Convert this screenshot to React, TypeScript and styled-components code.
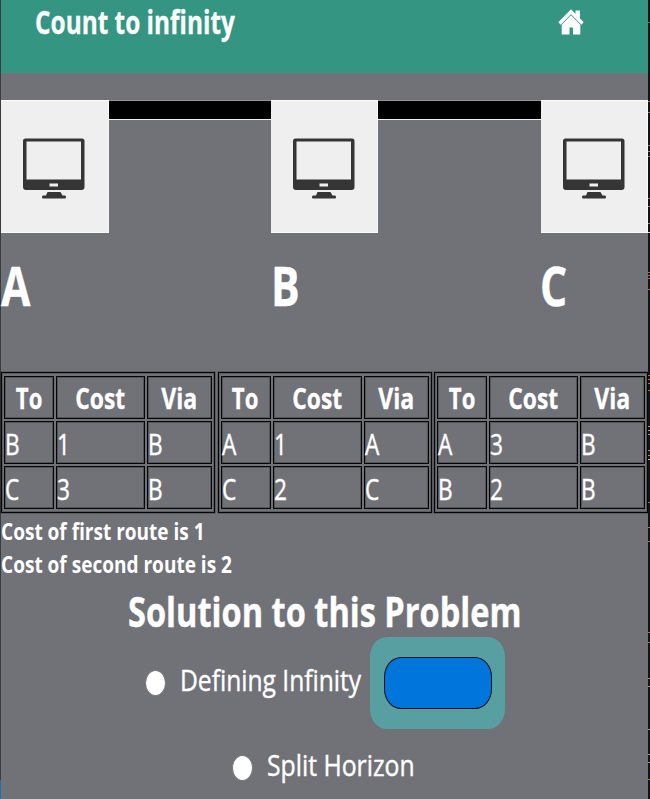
import React from "react";
import styled, { createGlobalStyle } from "styled-components";

const GlobalStyle = createGlobalStyle`
  * { box-sizing: border-box; }
  body { margin: 0; background: #717278; }
`;

const Window = styled.div`
  display: flex;
  width: 650px;
  height: 799px;
  overflow: hidden;
  background: #717278;
  color: #fff;
  font-family: "Open Sans", "Noto Sans", sans-serif;
`;

const LeftEdge = styled.div`
  flex: 0 0 1px;
  background: linear-gradient(#3b3b3d 780px, #2173ae 780px);
`;

const RightEdge = styled.svg`
  flex: 0 0 2px;
  width: 2px;
  height: 799px;
  background: #131313;
`;

const Page = styled.main`
  flex: 0 0 647px;
  display: flex;
  flex-direction: column;
`;

const Header = styled.header`
  flex: 0 0 73px;
  display: flex;
  justify-content: space-between;
  padding: 0 64px 0 34px;
  background: #349682;
`;

const HomeIcon = styled.svg`
  width: 26px;
  height: 26px;
  margin-top: 9px;
`;

/* Text condensed horizontally from its left edge or its centre. */
const Condensed = styled.span<{ $x: number; $origin?: string }>`
  display: inline-block;
  white-space: nowrap;
  transform: scaleX(${(p) => p.$x});
  transform-origin: ${(p) => p.$origin ?? "left"} center;
`;

const Title = styled.h1`
  margin: 0;
  width: 210px;
  font-size: 32px;
  line-height: 44px;
  -webkit-text-stroke: 0.3px #fff;
`;

const Network = styled.section`
  flex: 0 0 133px;
  display: flex;
  margin-top: 27px;
`;

const Device = styled.div`
  flex: 0 0 107.5px;
  display: flex;
  justify-content: center;
  padding-top: 37px;
  background: #efefef;
  border: solid #fafafa;
  border-width: 1px 1px 1px 0;
`;

const Monitor = styled.svg`
  width: 64px;
  height: 64px;
`;

const Link = styled.div`
  flex: 1;
  height: 20px;
  background: #000;
  border-top: 1px solid #97979a;
  border-bottom: 1px solid #efefef;
`;

const Names = styled.section`
  flex: 0 0 139px;
  display: grid;
  grid-template-columns: 270px 269px 108px;
  font-size: 54px;
  font-weight: 700;
  line-height: 104px;
  -webkit-text-stroke: 0.4px #fff;
`;

const Tables = styled.section`
  flex: 0 0 141px;
  display: flex;
  justify-content: space-between;
`;

const RouteTable = styled.table`
  table-layout: fixed;
  width: 214px;
  height: 141px;
  padding: 1px 0;
  border: 1px solid #050505;
  border-spacing: 2px;
  box-shadow: 0 0 0 0.5px rgba(0, 0, 0, 0.4), inset 0 0 0 1px rgba(0, 0, 0, 0.2);
`;

const Row = styled.tr`
  height: 43px;
`;

const HeadCell = styled.th<{ $w: number }>`
  width: ${(p) => p.$w}px;
  height: 43px;
  padding: 2px 0 0;
  border: 1px solid #050505;
  box-shadow: inset 0 0 0 1px rgba(0, 0, 0, 0.25);
  font-size: 28.5px;
  line-height: 39px;
  -webkit-text-stroke: 0.3px #fff;
`;

const HeadLabel = styled.div`
  display: flex;
  justify-content: center;
`;

const Cell = styled.td`
  height: 43px;
  padding: 2px 0 0;
  border: 1px solid #050505;
  box-shadow: inset 0 0 0 1px rgba(0, 0, 0, 0.25);
  font-size: 29px;
  line-height: 39px;
  -webkit-text-stroke: 0.4px #fff;
`;

const CostLine = styled.p`
  flex: 0 0 33px;
  min-height: 0;
  margin: 0;
  font-size: 23.5px;
  font-weight: 700;
  line-height: 36px;
`;

const SolutionTitle = styled.h2`
  flex: 0 0 58px;
  min-height: 0;
  display: flex;
  justify-content: center;
  margin: 0;
  font-size: 40.5px;
  line-height: 65px;
  -webkit-text-stroke: 0.4px #fff;
`;

const Option = styled.label<{ $height: number; $indent: number }>`
  flex: 0 0 ${(p) => p.$height}px;
  display: flex;
  align-items: center;
  padding-left: ${(p) => p.$indent}px;
  font-size: 30px;
`;

const Radio = styled.span`
  flex: none;
  width: 21px;
  height: 26px;
  margin: 0 14px 1px -1px;
  border: 1px solid #7d7b78;
  border-radius: 50%;
  background: #fff;
`;

const OptionText = styled.span<{ $width: number }>`
  flex: 0 0 ${(p) => p.$width}px;
  min-width: 0;
  line-height: 40px;
  padding-bottom: 6px;
  -webkit-text-stroke: 0.4px #fff;
`;

const ButtonFrame = styled.span`
  display: flex;
  width: 135px;
  height: 92px;
  padding: 20px 13px 20px 14px;
  border-radius: 17px / 20px;
  background: #589fa1;
`;

const BlueButton = styled.button`
  flex: 1;
  border: 1.5px solid #071018;
  border-radius: 17px / 20px;
  background: #0075dc;
`;

const edgeMarks: [number, string][] = [
  [22, "#3f78b5"], [101, "#a87452"], [112, "#a87452"], [145, "#77779a"], [151, "#8888a5"], [156, "#77779a"],
  [198, "#b06a48"], [206, "#888"], [223, "#888"], [232, "#ddd"], [272, "#b9613b"], [275, "#b9613b"],
  [278, "#b9613b"], [289, "#a87452"], [375, "#a87452"], [379, "#a87452"], [383, "#a87452"], [390, "#a87452"],
  [426, "#999"], [430, "#999"], [434, "#999"], [450, "#b28b5b"], [455, "#b28b5b"], [459, "#bbb"],
  [502, "#6684a0"], [527, "#a87452"], [541, "#a87452"], [632, "#a87452"], [642, "#a87452"], [678, "#aa935e"],
  [686, "#999"], [729, "#999"], [754, "#999"], [762, "#999"], [779, "#a87452"],
];

const tables = [
  [["B", "1", "B"], ["C", "3", "B"]],
  [["A", "1", "A"], ["C", "2", "C"]],
  [["A", "3", "B"], ["B", "2", "B"]],
];

function Computer() {
  return (
    <Device>
      <Monitor viewBox="0 0 64 64">
        <path
          fillRule="evenodd"
          fill="#353535"
          d="M3.5 0.5h56.500a2.500 2.500 0 0 1 2.500 2.500v46a3 3 0 0 1-3 3H4a3 3 0 0 1-3-3V3a2.500 2.500 0 0 1 2.500-2.500ZM4.500 3.500V41.500H59V3.500ZM27.500 45.500V48.500H36V45.500Z"
        />
        <path fill="#353535" d="M25.500 54h13l2 3.500H43q1 0 1 1.500t-1 1.500H21q-1 0-1-1.500t1-1.500h3Z" />
      </Monitor>
    </Device>
  );
}

function Routes({ rows }: { rows: string[][] }) {
  return (
    <RouteTable>
      <thead>
        <Row>
          <HeadCell $w={50}><HeadLabel><Condensed $x={0.775} $origin="center">To</Condensed></HeadLabel></HeadCell>
          <HeadCell $w={89}><HeadLabel><Condensed $x={0.8} $origin="center">Cost</Condensed></HeadLabel></HeadCell>
          <HeadCell $w={65}><HeadLabel><Condensed $x={0.81} $origin="center">Via</Condensed></HeadLabel></HeadCell>
        </Row>
      </thead>
      <tbody>
        {rows.map((row, i) => (
          <Row key={i}>
            {row.map((value, j) => (
              <Cell key={j}><Condensed $x={0.78}>{value}</Condensed></Cell>
            ))}
          </Row>
        ))}
      </tbody>
    </RouteTable>
  );
}

export default function App() {
  return (
    <>
      <GlobalStyle />
      <Window>
        <LeftEdge />
        <Page>
          <Header>
            <Title><Condensed $x={0.762}>Count to infinity</Condensed></Title>
            <HomeIcon viewBox="0 0 26 26">
              <path d="M1.500 14.500L13 2.800L24.500 14.500" fill="none" stroke="#fff" strokeWidth="3.4" />
              <path d="M17.500 1.500H22V11L17.500 6.500Z" fill="#fff" />
              <path d="M13 6.300L22.300 15.700V25.500H15V18.500H11.500V25.500H3.700V15.700Z" fill="#fff" />
            </HomeIcon>
          </Header>
          <Network>
            <Computer />
            <Link />
            <Computer />
            <Link />
            <Computer />
          </Network>
          <Names>
            <Condensed $x={0.79}>A</Condensed>
            <Condensed $x={0.79}>B</Condensed>
            <Condensed $x={0.79}>C</Condensed>
          </Names>
          <Tables>
            {tables.map((rows, i) => <Routes key={i} rows={rows} />)}
          </Tables>
          <CostLine><Condensed $x={0.81}>Cost of first route is 1</Condensed></CostLine>
          <CostLine><Condensed $x={0.81}>Cost of second route is 2</Condensed></CostLine>
          <SolutionTitle><Condensed $x={0.804} $origin="center">Solution to this Problem</Condensed></SolutionTitle>
          <Option $height={92} $indent={145}>
            <Radio />
            <OptionText $width={190}><Condensed $x={0.82}>Defining Infinity</Condensed></OptionText>
            <ButtonFrame><BlueButton type="button" aria-label="Defining Infinity" /></ButtonFrame>
          </Option>
          <Option $height={78} $indent={232}>
            <Radio />
            <OptionText $width={150}><Condensed $x={0.825}>Split Horizon</Condensed></OptionText>
          </Option>
        </Page>
        <RightEdge viewBox="0 0 2 799">
          {edgeMarks.map(([y, color]) => <rect key={y} x="0" y={y} width="2" height="1" fill={color} />)}
        </RightEdge>
      </Window>
    </>
  );
}
